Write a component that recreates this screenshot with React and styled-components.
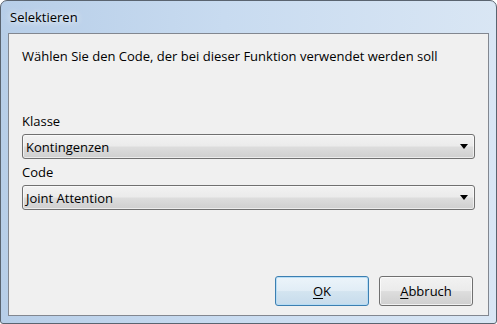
import React from "react";
import styled, { createGlobalStyle } from "styled-components";

const Global = createGlobalStyle`
  html, body { margin: 0; padding: 0; background: #ffffff; }
  body { font-family: "Open Sans", "Noto Sans", sans-serif; }
`;

const Window = styled.div`
  box-sizing: border-box;
  width: 497px;
  height: 324px;
  border: 1px solid #5a6470;
  border-radius: 7px 7px 3px 3px;
  background: linear-gradient(90deg, #b7cee8 0%, #c8dbf0 45%, #d9e6f4 100%);
  display: flex;
  flex-direction: column;
  padding: 0 7px 7px 7px;
  overflow: hidden;
`;

const TitleBar = styled.div`
  height: 32px;
  display: flex;
  align-items: center;
  padding-left: 2px;
  font-size: 13px;
  color: #000;
  text-shadow: 0 0 6px rgba(255, 255, 255, 0.9), 0 0 10px rgba(255, 255, 255, 0.7);
`;

const Client = styled.div`
  flex: 1;
  box-sizing: border-box;
  border: 1px solid #828790;
  background: #f0f0f0;
  display: flex;
  flex-direction: column;
  padding: 14px 13px 9px 13px;
  font-size: 13px;
  color: #000;
`;

const Intro = styled.div`
  line-height: 16px;
`;

const Label = styled.div`
  line-height: 16px;
  margin-top: ${(p) => p.$top}px;
`;

const Combo = styled.div`
  box-sizing: border-box;
  margin-top: 5px;
  height: 25px;
  border: 1px solid #707070;
  border-radius: 3px;
  background: linear-gradient(#f2f2f2 0%, #ebebeb 48%, #dddddd 52%, #cfcfcf 100%);
  box-shadow: inset 0 0 0 1px rgba(255, 255, 255, 0.6);
  display: flex;
  align-items: center;
  justify-content: space-between;
  padding: 0 6px 0 3px;
  line-height: 16px;
`;

const Arrow = styled.span`
  width: 0;
  height: 0;
  border-left: 4px solid transparent;
  border-right: 4px solid transparent;
  border-top: 5px solid #000;
`;

const ButtonRow = styled.div`
  margin-top: auto;
  display: flex;
  justify-content: flex-end;
  gap: 10px;
  padding-right: 2px;
`;

const Button = styled.div`
  box-sizing: border-box;
  width: 94px;
  height: 30px;
  border-radius: 3px;
  border: 1px solid ${(p) => (p.$default ? "#3c7fb1" : "#707070")};
  background: ${(p) =>
    p.$default
      ? "linear-gradient(#ecf4fa 0%, #e1edf6 48%, #d3e4f0 52%, #c7dcec 100%)"
      : "linear-gradient(#f2f2f2 0%, #ebebeb 48%, #dddddd 52%, #cfcfcf 100%)"};
  box-shadow: inset 0 0 0 1px ${(p) => (p.$default ? "rgba(180,220,245,0.9)" : "rgba(255,255,255,0.7)")};
  display: flex;
  align-items: center;
  justify-content: center;
  font-size: 13px;
  line-height: 16px;
`;

const Key = styled.span`
  text-decoration: underline;
  text-underline-offset: 2px;
`;

export default function App() {
  return (
    <>
      <Global />
      <Window>
        <TitleBar>Selektieren</TitleBar>
        <Client>
          <Intro>Wählen Sie den Code, der bei dieser Funktion verwendet werden soll</Intro>
          <Label $top={49}>Klasse</Label>
          <Combo>
            <span>Kontingenzen</span>
            <Arrow />
          </Combo>
          <Label $top={5}>Code</Label>
          <Combo>
            <span>Joint Attention</span>
            <Arrow />
          </Combo>
          <ButtonRow>
            <Button $default>
              <span><Key>O</Key>K</span>
            </Button>
            <Button>
              <span><Key>A</Key>bbruch</span>
            </Button>
          </ButtonRow>
        </Client>
      </Window>
    </>
  );
}
